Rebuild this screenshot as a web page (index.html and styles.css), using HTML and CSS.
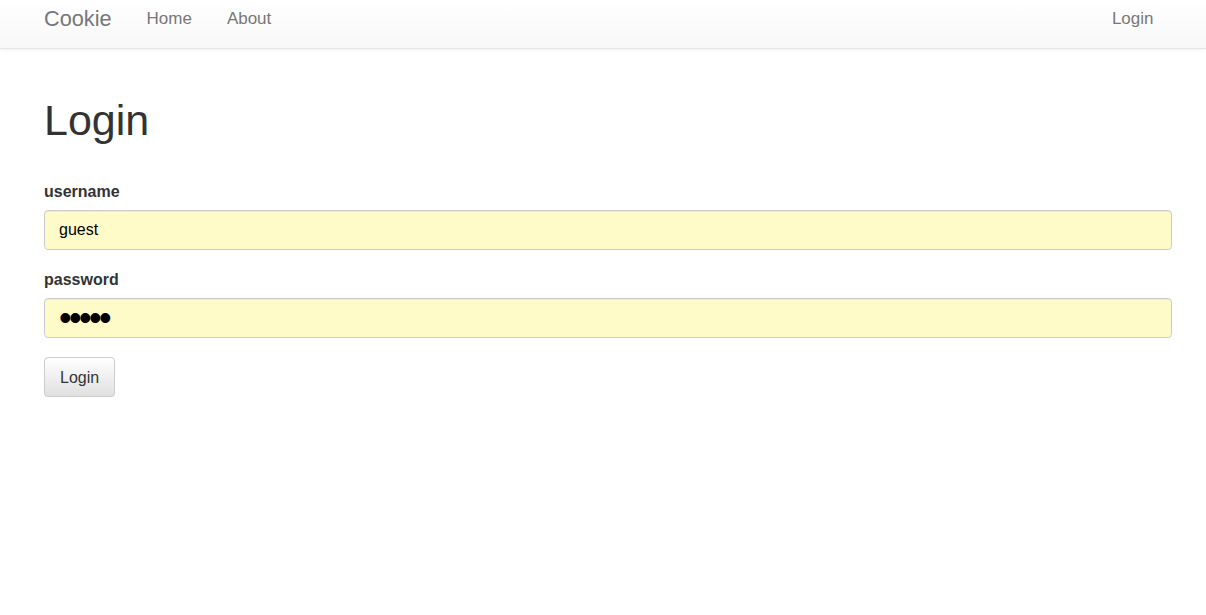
FILE: index.html
```html
<!DOCTYPE html>
<html lang="en">
<head>
<meta charset="utf-8">
<title>Cookie - Login</title>
<link rel="stylesheet" href="styles.css">
</head>
<body>
<nav class="navbar">
  <div class="nav-inner">
    <a class="brand" href="#">Cookie</a>
    <ul class="nav-links">
      <li><a href="#">Home</a></li>
      <li><a href="#">About</a></li>
    </ul>
    <ul class="nav-links nav-right">
      <li><a href="#">Login</a></li>
    </ul>
  </div>
</nav>
<main class="container">
  <h1 class="title">Login</h1>
  <form class="login-form">
    <div class="form-group">
      <label class="label" for="username">username</label>
      <input class="field" id="username" type="text" value="guest">
    </div>
    <div class="form-group">
      <label class="label" for="password">password</label>
      <input class="field field-secret" id="password" type="password" value="guest">
    </div>
    <button class="btn" type="button">Login</button>
  </form>
</main>
</body>
</html>
```
FILE: styles.css
```css
* { box-sizing: border-box; }
html, body { margin: 0; padding: 0; }
body {
  font-family: "Liberation Sans", Arial, sans-serif;
  color: #333;
  background: #fff;
}
.navbar {
  height: 49px;
  background: linear-gradient(to bottom, #ffffff 0%, #f8f8f8 100%);
  border-bottom: 1px solid #e5e5e5;
  box-shadow: 0 1px 4px rgba(0,0,0,0.06);
}
.nav-inner {
  display: flex;
  align-items: flex-start;
  padding: 0 35px 0 44px;
}
.brand {
  font-size: 21.7px;
  line-height: 24px;
  padding-top: 7px;
  color: #777;
  text-decoration: none;
  margin-right: 17.5px;
}
.nav-links {
  display: flex;
  list-style: none;
  margin: 0;
  padding: 0;
}
.nav-links a {
  display: block;
  font-size: 17px;
  line-height: 20px;
  padding: 9px 17.5px 0;
  color: #777;
  text-decoration: none;
}
.nav-right { margin-left: auto; }
.container {
  padding: 0 34px 0 44px;
}
.title {
  font-size: 43px;
  font-weight: 500;
  line-height: 48px;
  margin: 47px 0 37px;
  color: #333;
}
.form-group { margin-bottom: 19px; }
.label {
  display: block;
  font-size: 16px;
  font-weight: bold;
  line-height: 22px;
  margin-bottom: 7px;
  color: #333;
}
.field {
  display: block;
  width: 100%;
  height: 40px;
  padding: 0 14px;
  font-family: "Liberation Sans", Arial, sans-serif;
  font-size: 16px;
  color: #000;
  background: #fffbc8;
  border: 1px solid #cccccc;
  border-radius: 4px;
  box-shadow: inset 0 1px 1px rgba(0,0,0,0.06);
  outline: none;
}
.field-secret {
  font-size: 36px;
  letter-spacing: -2.6px;
  padding-left: 14px;
}
.btn {
  display: block;
  height: 40px;
  padding: 1px 15px 0;
  font-family: "Liberation Sans", Arial, sans-serif;
  font-size: 16px;
  color: #333;
  background: linear-gradient(to bottom, #ffffff 0%, #e0e0e0 100%);
  border: 1px solid #cccccc;
  border-radius: 4px;
  box-shadow: 0 1px 0 rgba(255,255,255,0.15) inset, 0 1px 1px rgba(0,0,0,0.07);
}
```
